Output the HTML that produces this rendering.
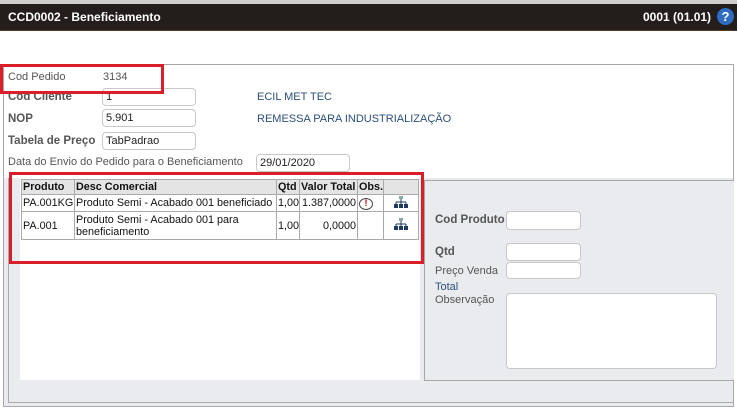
<!DOCTYPE html>
<html><head><meta charset="utf-8"><style>
*{margin:0;padding:0;box-sizing:border-box}
body{width:737px;height:410px;background:#fff;font-family:"Liberation Sans",Arial,sans-serif;position:relative;overflow:hidden;color:#555}
.a{position:absolute;white-space:nowrap}
.inp{position:absolute;background:#fff;border:1px solid #c8c8c8;border-radius:4px;font-size:11px;color:#222;padding:2px 3px;line-height:13px}
.lbl{font-size:11px;color:#555}
.b{font-weight:bold;font-size:11.5px;color:#555}
.blue{color:#2c4f7c;font-size:11px}
table{border-collapse:collapse;font-size:10.8px;color:#111;table-layout:fixed}
td,th{border:1px solid #aaa;padding:0 1px;line-height:12px;overflow:hidden;white-space:nowrap}
th{background:#e4e4e4;text-align:left;font-weight:bold;height:15px}
</style></head><body>
<div class="a" style="left:0;top:0;width:737px;height:4px;background:#cfcfcf"></div>
<div class="a" style="left:0;top:4px;width:737px;height:27px;background:#231e1c;border-bottom:1px solid #5a3a2a"></div>
<div class="a" style="left:8px;top:10px;color:#fff;font-size:12px;font-weight:bold">CCD0002 - Beneficiamento</div>
<div class="a" style="left:643px;top:10px;color:#fff;font-size:12px;font-weight:bold">0001 (01.01)</div>
<div class="a" style="left:717px;top:8px;width:17px;height:17px;border-radius:50%;background:#2d6cc0;color:#fff;font-weight:bold;font-size:13px;text-align:center;line-height:17px">?</div>

<div class="a" style="left:3px;top:64px;width:731px;height:343px;border:1px solid #a8a8a8;background:#fff"></div>
<div class="a" style="left:4px;top:178px;width:729px;height:228px;background:#eaebee"></div>
<div class="a" style="left:8px;top:178px;width:726px;height:225px;border-left:1px solid #aaa;border-bottom:1px solid #aaa"></div>
<div class="a" style="left:20px;top:178px;width:400px;height:202px;background:#fff"></div>
<div class="a" style="left:424px;top:180px;width:310px;height:201px;border:1px solid #a8a8a8;border-right:none;background:#eaebee"></div>

<div class="a lbl" style="left:8px;top:71px">Cod Pedido</div>
<div class="a lbl" style="left:103px;top:71px">3134</div>
<div class="a b" style="left:8px;top:91px">Cod Cliente</div>
<div class="inp" style="left:102px;top:88px;width:94px;height:18px">1</div>
<div class="a blue" style="left:257px;top:91px">ECIL MET TEC</div>
<div class="a b" style="left:8px;top:113px">NOP</div>
<div class="inp" style="left:102px;top:109px;width:94px;height:18px">5.901</div>
<div class="a blue" style="left:257px;top:113px">REMESSA PARA INDUSTRIALIZAÇÃO</div>
<div class="a b" style="left:8px;top:135px">Tabela de Preço</div>
<div class="inp" style="left:102px;top:132px;width:94px;height:18px">TabPadrao</div>
<div class="a lbl" style="left:8px;top:156px">Data do Envio do Pedido para o Beneficiamento</div>
<div class="inp" style="left:256px;top:154px;width:94px;height:18px">29/01/2020</div>

<table class="a" style="left:21px;top:179px;width:397px">
<colgroup><col style="width:53px"><col style="width:202px"><col style="width:23px"><col style="width:58px"><col style="width:26px"><col style="width:35px"></colgroup>
<tr><th>Produto</th><th>Desc Comercial</th><th>Qtd</th><th>Valor Total</th><th>Obs.</th><th></th></tr>
<tr style="height:17px"><td>PA.001KG</td><td>Produto Semi - Acabado 001 beneficiado</td><td>1,00</td><td style="text-align:right">1.387,0000</td><td><span style="display:inline-block;width:14px;height:12px;border:1.5px solid #444;border-radius:50%;color:#c00;font-size:9px;font-weight:bold;text-align:center;line-height:9px">!</span></td><td style="text-align:center"><svg width="14" height="12"><rect x="5" y="0" width="4" height="3" fill="#8aa"/><path d="M7 3v3M2 6h10M2 6v2M7 6v2M12 6v2" stroke="#1e3a60" fill="none"/><rect x="0" y="8" width="4" height="4" fill="#1e3a60"/><rect x="5" y="8" width="4" height="4" fill="#1e3a60"/><rect x="10" y="8" width="4" height="4" fill="#1e3a60"/></svg></td></tr>
<tr style="height:28px"><td>PA.001</td><td style="white-space:normal">Produto Semi - Acabado 001 para beneficiamento</td><td>1,00</td><td style="text-align:right">0,0000</td><td></td><td style="text-align:center"><svg width="14" height="12"><rect x="5" y="0" width="4" height="3" fill="#8aa"/><path d="M7 3v3M2 6h10M2 6v2M7 6v2M12 6v2" stroke="#1e3a60" fill="none"/><rect x="0" y="8" width="4" height="4" fill="#1e3a60"/><rect x="5" y="8" width="4" height="4" fill="#1e3a60"/><rect x="10" y="8" width="4" height="4" fill="#1e3a60"/></svg></td></tr>
</table>

<div class="a" style="left:9px;top:172px;width:415px;height:92px;border:3px solid #d9202a"></div>
<div class="a" style="left:0;top:64px;width:164px;height:30px;border:3px solid #d9202a"></div>

<div class="a b" style="left:435px;top:214px">Cod Produto</div>
<div class="inp" style="left:506px;top:211px;width:75px;height:19px"></div>
<div class="a b" style="left:435px;top:246px">Qtd</div>
<div class="inp" style="left:506px;top:243px;width:75px;height:18px"></div>
<div class="a lbl" style="left:435px;top:265px">Preço Venda</div>
<div class="inp" style="left:506px;top:262px;width:75px;height:17px"></div>
<div class="a blue" style="left:435px;top:281px">Total</div>
<div class="a lbl" style="left:435px;top:294px">Observação</div>
<div class="inp" style="left:506px;top:293px;width:211px;height:76px"></div>
</body></html>
